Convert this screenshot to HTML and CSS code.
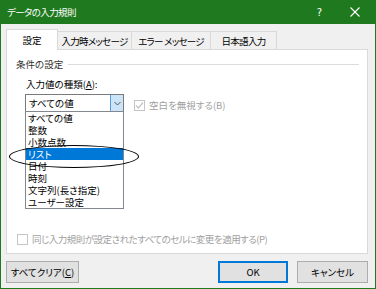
FILE: index.html
```html
<!DOCTYPE html>
<html>
<head>
    <title>データの入力規則</title>
    <link rel="stylesheet" href="styles.css">
</head>
<body>
    <div class="window">
        <div class="titlebar">
            <span class="title">データの入力規則</span>
            <span class="title-buttons">
                <span class="help">?</span>
                <svg class="close" width="10" height="10" viewBox="0 0 10 10">
                    <path d="M0.5 0.5 L9.5 9.5 M9.5 0.5 L0.5 9.5" stroke="#fff" stroke-width="1.1"/>
                </svg>
            </span>
        </div>

        <div class="content">
            <div class="tabs">
                <div class="tab selected">設定</div>
                <div class="tab tab-input">入力時メッセージ</div>
                <div class="tab tab-error">エラー メッセージ</div>
                <div class="tab tab-ime">日本語入力</div>
            </div>

            <div class="panel">
                <div class="group-title">
                    <span>条件の設定</span>
                    <span class="group-line"></span>
                </div>

                <div class="field-label">入力値の種類(<u>A</u>):</div>

                <div class="field-row">
                    <div class="picker">
                        <div class="combo">
                            <span class="combo-value">すべての値</span>
                            <span class="combo-button">
                                <svg width="7" height="5" viewBox="0 0 7 5">
                                    <path d="M0.5 1 L3.5 4 L6.5 1" fill="none" stroke="#555" stroke-width="1"/>
                                </svg>
                            </span>
                        </div>
                        <ul class="listbox">
                            <li>すべての値</li>
                            <li>整数</li>
                            <li>小数点数</li>
                            <li class="active">リスト</li>
                            <li>日付</li>
                            <li>時刻</li>
                            <li>文字列(長さ指定)</li>
                            <li>ユーザー設定</li>
                        </ul>
                        <div class="circle"></div>
                    </div>

                    <label class="check disabled top-check">
                        <span class="box">
                            <svg width="9" height="9" viewBox="0 0 9 9">
                                <path d="M1 4.5 L3.5 7 L8 1.5" fill="none" stroke="#c4c4c4" stroke-width="1.2"/>
                            </svg>
                        </span>
                        空白を無視する(B)
                    </label>
                </div>

                <label class="check disabled bottom-check">
                    <span class="box"></span>
                    <span class="tight">同じ入力規則が設定されたすべてのセルに変更を適用する(P)</span>
                </label>
            </div>

            <div class="buttons">
                <button class="btn clear">すべてクリア(<u>C</u>)</button>
                <div class="right-buttons">
                    <button class="btn default">OK</button>
                    <button class="btn">キャンセル</button>
                </div>
            </div>
        </div>
    </div>
</body>
</html>
```

FILE: styles.css
```css
* {
    box-sizing: border-box;
}

body {
    margin: 0;
    font-family: "Noto Sans CJK JP", sans-serif;
    font-size: 9.5px;
    font-feature-settings: "palt";
    color: #000;
    background-color: #fff;
}

.window {
    width: 376px;
    height: 289px;
    display: flex;
    flex-direction: column;
    background-color: #f0f0f0;
    border: 1px solid #1f7a1f;
    border-top: none;
}

.titlebar {
    height: 24px;
    margin: 0 -1px;
    padding: 0 16px 0 7px;
    display: flex;
    align-items: center;
    justify-content: space-between;
    background-color: #1f7a1f;
    color: #fff;
}

.title {
    letter-spacing: -0.6px;
}

.title-buttons {
    display: flex;
    align-items: center;
    gap: 28px;
}

.help {
    font-family: "DejaVu Sans", sans-serif;
    font-size: 10px;
}

.content {
    flex: 1;
    display: flex;
    flex-direction: column;
    padding: 5px 7px 4px 5px;
}

.tabs {
    display: flex;
    align-items: flex-end;
    height: 20px;
}

.tab {
    height: 18px;
    display: flex;
    align-items: center;
    justify-content: center;
    letter-spacing: -0.7px;
    background-color: #f0f0f0;
    border: 1px solid #d9d9d9;
    border-bottom: none;
    margin-left: -1px;
}

.tab.selected {
    height: 21px;
    width: 52px;
    margin-left: 0;
    margin-bottom: -1px;
    letter-spacing: 0;
    background-color: #fff;
    position: relative;
    z-index: 1;
}

.tab-input {
    width: 75px;
}

.tab-error {
    width: 80px;
}

.tab-ime {
    width: 67px;
}

.panel {
    height: 205px;
    padding: 7px 8px 0 9px;
    background-color: #fff;
    border: 1px solid #d9d9d9;
}

.group-title {
    display: flex;
    align-items: center;
    gap: 5px;
    line-height: 14px;
    color: #333;
}

.group-line {
    flex: 1;
    border-top: 1px solid #dcdcdc;
}

.field-label {
    margin: 6px 0 0 10px;
    line-height: 14px;
}

.field-row {
    display: flex;
    margin-top: 3px;
    margin-left: 9px;
}

.picker {
    position: relative;
    width: 99px;
}

.combo {
    height: 18px;
    display: flex;
    border: 1px solid #7a7a7a;
    background-color: #fff;
}

.combo-value {
    flex: 1;
    padding-left: 3px;
    line-height: 16px;
}

.combo-button {
    width: 13px;
    display: flex;
    align-items: center;
    justify-content: center;
    background-color: #cce4f7;
    border-left: 1px solid #569de5;
}

.listbox {
    list-style: none;
    margin: -1px 0 0;
    padding: 0;
    border: 1px solid #828790;
    background-color: #fff;
}

.listbox li {
    height: 12px;
    line-height: 12px;
    padding-left: 2px;
}

.listbox li.active {
    background-color: #0078d7;
    color: #fff;
}

.circle {
    position: absolute;
    left: -16px;
    top: 51px;
    width: 130px;
    height: 23px;
    border: 1.5px solid #000;
    border-radius: 50%;
}

.check {
    display: flex;
    align-items: center;
    gap: 4px;
    line-height: 14px;
}

.check.disabled {
    color: #a0a0a0;
}

.box {
    width: 11px;
    height: 11px;
    display: flex;
    align-items: center;
    justify-content: center;
    border: 1px solid #c4c4c4;
    background-color: #fff;
}

.top-check {
    margin: 4px 0 0 10px;
    align-self: flex-start;
}

.bottom-check {
    margin: 23px 0 0 1px;
}

.tight {
    letter-spacing: -0.5px;
}

.buttons {
    display: flex;
    justify-content: space-between;
    margin-top: 7px;
}

.right-buttons {
    display: flex;
    gap: 9px;
}

.btn {
    height: 22px;
    width: 71px;
    padding: 0;
    font-family: "Noto Sans CJK JP", sans-serif;
    font-size: 9.5px;
    font-feature-settings: "palt";
    background-color: #e1e1e1;
    border: 1px solid #adadad;
    color: #000;
}

.btn.clear {
    width: 73px;
}

.btn.default {
    width: 70px;
    border: 2px solid #0078d7;
}
```
